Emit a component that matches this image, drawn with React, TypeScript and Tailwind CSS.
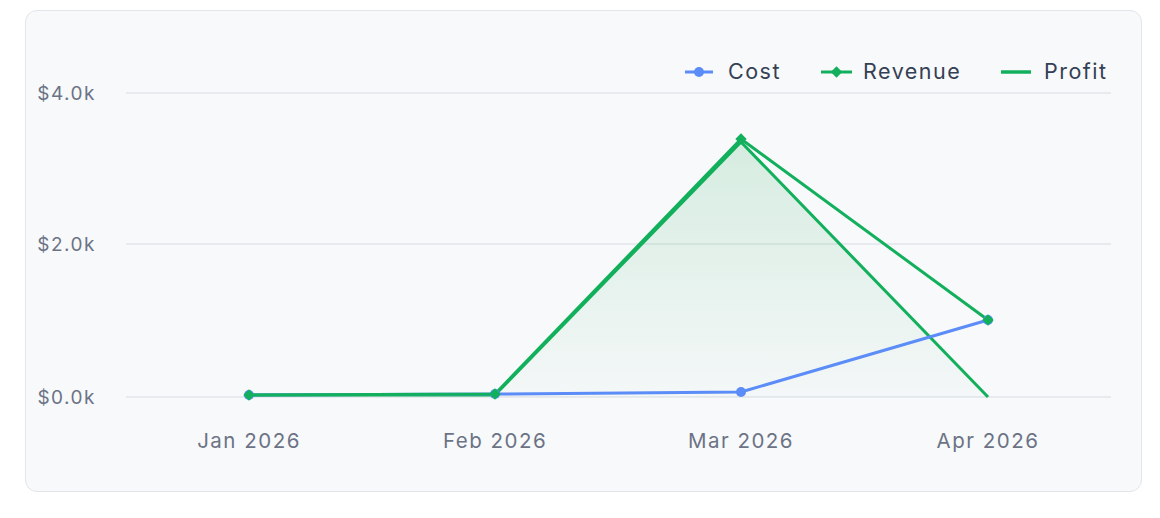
export default function App() {
  const xs = [223, 469, 715, 962];
  const cost = [384, 383, 381, 309];
  const rev = [384, 383, 128, 309];
  const prof = [384, 384, 131, 386];
  const pts = (ys: number[]) => xs.map((x, i) => `${x},${ys[i]}`).join(" ");
  const font = { fontFamily: "Inter, 'Noto Sans', sans-serif" };
  return (
    <div className="w-[1160px] h-[518px] bg-white pt-[10px] pl-[25px]">
      <div className="w-[1117px] h-[482px] rounded-xl border border-[#e2e5ea] bg-[#f8f9fb] overflow-hidden">
        <svg width="1117" height="482" style={font}>
          <defs>
            <linearGradient id="g" x1="0" y1="0" x2="0" y2="1">
              <stop offset="0%" stopColor="#16a34a" stopOpacity="0.15" />
              <stop offset="100%" stopColor="#16a34a" stopOpacity="0.02" />
            </linearGradient>
          </defs>
          {[82, 233, 386].map((y) => (
            <line key={y} x1="100" x2="1085" y1={y} y2={y} stroke="#e2e5ea" strokeWidth="1.5" />
          ))}
          {[["$4.0k", 82], ["$2.0k", 233], ["$0.0k", 386]].map(([t, y]) => (
            <text key={t as string} x="70" y={(y as number) + 7} textAnchor="end" fontSize="19" letterSpacing="1.5" fill="#6b7385">{t}</text>
          ))}
          {["Jan 2026", "Feb 2026", "Mar 2026", "Apr 2026"].map((t, i) => (
            <text key={t} x={xs[i]} y="437" textAnchor="middle" fontSize="20.5" letterSpacing="1.5" fill="#6b7385">{t}</text>
          ))}
          <polygon points={`${pts(prof)} 962,386 223,386`} fill="url(#g)" />
          <polyline points={pts(prof)} fill="none" stroke="#12b05c" strokeWidth="3" strokeLinejoin="round" />
          <polyline points={pts(cost)} fill="none" stroke="#5b8cf7" strokeWidth="3" strokeLinejoin="round" />
          <polyline points={pts(rev)} fill="none" stroke="#12b05c" strokeWidth="3" strokeLinejoin="round" />
          {xs.map((x, i) => (
            <circle key={"c" + i} cx={x} cy={cost[i]} r="5" fill="#5b8cf7" />
          ))}
          {xs.map((x, i) => (
            <rect key={"r" + i} x={x - 4} y={rev[i] - 4} width="8" height="8" fill="#12b05c" transform={`rotate(45 ${x} ${rev[i]})`} />
          ))}
          <line x1="659" x2="687" y1="61" y2="61" stroke="#5b8cf7" strokeWidth="3" />
          <circle cx="673" cy="61" r="5" fill="#5b8cf7" />
          <text x="702" y="68" fontSize="21.5" letterSpacing="1.5" fill="#344054">Cost</text>
          <line x1="795" x2="826" y1="61" y2="61" stroke="#12b05c" strokeWidth="3" />
          <rect x="806.5" y="57" width="8" height="8" fill="#12b05c" transform="rotate(45 810.5 61)" />
          <text x="837" y="68" fontSize="21.5" letterSpacing="1.5" fill="#344054">Revenue</text>
          <line x1="975" x2="1005" y1="61" y2="61" stroke="#12b05c" strokeWidth="3.5" />
          <text x="1018" y="68" fontSize="21.5" letterSpacing="1.5" fill="#344054">Profit</text>
        </svg>
      </div>
    </div>
  );
}
